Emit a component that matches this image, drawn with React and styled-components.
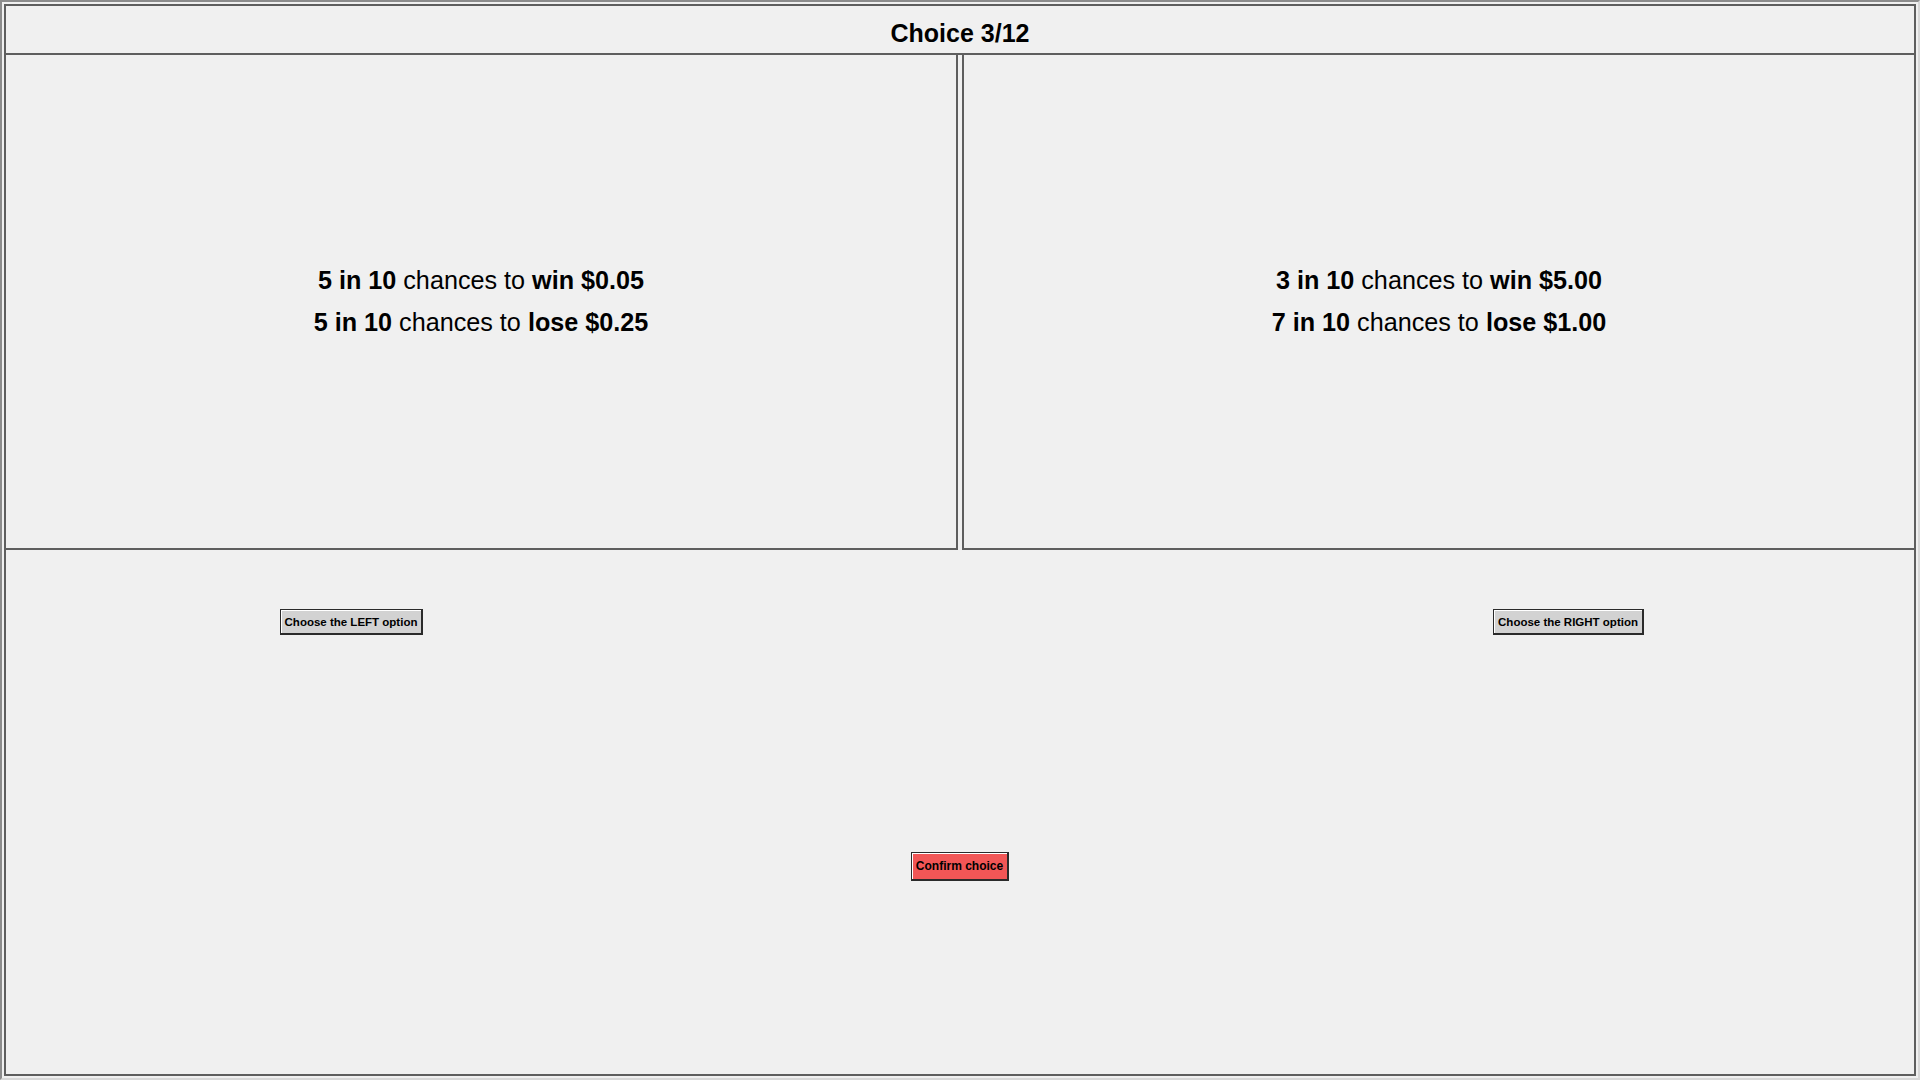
import React from "react";
import styled, { createGlobalStyle } from "styled-components";

const Global = createGlobalStyle`
  html, body { margin: 0; padding: 0; background: #f0f0f0; }
  body { font-family: "Liberation Sans", Arial, sans-serif; color: #000; }
  * { box-sizing: border-box; }
`;

const Outer = styled.div`
  width: 1920px;
  height: 1080px;
  padding: 2px;
  border-style: solid;
  border-width: 2px;
  border-color: #8c8c8c #d8d8d8 #d8d8d8 #8c8c8c;
  background: #f0f0f0;
`;

const Frame = styled.div`
  height: 100%;
  border: 2px solid #5e5e5e;
  display: flex;
  flex-direction: column;
`;

const Header = styled.div`
  height: 49px;
  padding-top: 7px;
  border-bottom: 2px solid #5e5e5e;
  text-align: center;
  font-size: 25px;
  font-weight: bold;
  line-height: 40px;
`;

const PanelRow = styled.div`
  display: flex;
  gap: 4px;
  height: 495px;
`;

const Panel = styled.div`
  flex: 1;
  border-bottom: 2px solid #5e5e5e;
  ${(p) => (p.$side === "left" ? "border-right: 2px solid #5e5e5e;" : "border-left: 2px solid #5e5e5e;")}
  display: flex;
  flex-direction: column;
  align-items: center;
  justify-content: center;
  padding-bottom: 2px;
  font-size: 25.2px;
  line-height: 42px;
`;

const Line = styled.div`
  white-space: nowrap;
`;

const Bottom = styled.div`
  flex: 1;
  padding-top: 59px;
  display: flex;
  flex-direction: column;
  align-items: center;
`;

const ChoiceRow = styled.div`
  width: 100%;
  display: grid;
  grid-template-columns: 691px 1fr 691px;
  align-items: center;
`;

const Cell = styled.div`
  display: flex;
  justify-content: center;
  grid-column: ${(p) => p.$col};
`;

const Button = styled.button`
  font-family: "Liberation Sans", Arial, sans-serif;
  font-weight: bold;
  font-size: ${(p) => (p.$confirm ? "12px" : "11.5px")};
  color: #000;
  background: ${(p) => (p.$confirm ? "#f25656" : "#d2d2d2")};
  height: ${(p) => (p.$confirm ? "29px" : "26px")};
  padding: 0 4px;
  border-style: solid;
  border-width: 1px 2px 2px 1px;
  border-color: #2a2a2a;
  box-shadow: inset 1px 1px 0 #ffffff;
  cursor: pointer;
  white-space: nowrap;
`;

const ConfirmWrap = styled.div`
  margin-top: 217px;
`;

const App = () => (
  <>
    <Global />
    <Outer>
      <Frame>
        <Header>Choice 3/12</Header>
        <PanelRow>
          <Panel $side="left">
            <Line>
              <b>5 in 10</b> chances to <b>win $0.05</b>
            </Line>
            <Line>
              <b>5 in 10</b> chances to <b>lose $0.25</b>
            </Line>
          </Panel>
          <Panel $side="right">
            <Line>
              <b>3 in 10</b> chances to <b>win $5.00</b>
            </Line>
            <Line>
              <b>7 in 10</b> chances to <b>lose $1.00</b>
            </Line>
          </Panel>
        </PanelRow>
        <Bottom>
          <ChoiceRow>
            <Cell $col={1}>
              <Button>Choose the LEFT option</Button>
            </Cell>
            <Cell $col={3}>
              <Button>Choose the RIGHT option</Button>
            </Cell>
          </ChoiceRow>
          <ConfirmWrap>
            <Button $confirm>Confirm choice</Button>
          </ConfirmWrap>
        </Bottom>
      </Frame>
    </Outer>
  </>
);

export default App;
